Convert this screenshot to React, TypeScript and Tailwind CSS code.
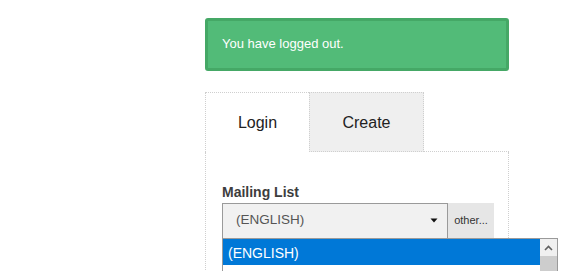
import React from "react";

export default function App() {
  return (
    <div className="h-[271px] w-[573px] overflow-hidden bg-white font-['Liberation_Sans',Arial,sans-serif]">
      <div className="ml-[205px] w-[304px] pt-[18px]">
        <div className="flex h-[53px] items-center rounded-[3px] border-[3px] border-[#45a866] bg-[#52bb78] pb-[2px] pl-[14px] text-[13px] text-white">
          You have logged out.
        </div>
        <div className="mt-[21px] flex h-[60px]">
          <div className="flex w-[104px] items-center justify-center border-l border-t border-dotted border-[#cfcfcf] pt-[1px] text-[16px] text-[#222]">
            Login
          </div>
          <div className="flex w-[115px] items-center justify-center border border-dotted border-[#cfcfcf] bg-[#efefef] pt-[1px] text-[16px] text-[#222]">
            Create
          </div>
          <div className="flex-1 border-b border-dotted border-[#cfcfcf]" />
        </div>
        <div className="relative h-[200px] border-l border-r border-dotted border-[#cfcfcf] pl-[16px] pt-[32px]">
          <div className="mb-[3px] text-[14px] font-bold leading-[16px] text-[#3d3d3d]">
            Mailing List
          </div>
          <div className="flex">
            <div className="flex h-[36px] w-[226px] items-center border border-[#9a9a9a] bg-[#f1f1f1] pl-[13px] pr-[9px] text-[13.5px] text-[#555]">
              <span className="flex-1 pb-[1px]">(ENGLISH)</span>
              <svg width="8" height="5" viewBox="0 0 8 5" className="mb-[1px]">
                <path d="M0.5 0.5 L7.5 0.5 L4 4.5 Z" fill="#111" />
              </svg>
            </div>
            <div className="flex h-[36px] w-[46px] items-center justify-center bg-[#e6e6e6] pb-[1px] text-[11px] text-[#333]">
              other...
            </div>
          </div>
          <div className="absolute left-[16px] top-[86px] w-[336px] border border-[#9a9a9a] bg-white">
            <div className="flex">
              <div className="flex-1">
                <div className="flex h-[26px] items-center bg-[#0078d7] pl-[5px] pt-[3px] text-[14px] text-white">
                  (ENGLISH)
                </div>
                <div className="h-[22px]" />
              </div>
              <div className="flex w-[17px] flex-col bg-[#f0f0f0]">
                <div className="flex h-[17px] items-center justify-center">
                  <svg width="9" height="6" viewBox="0 0 9 6">
                    <path d="M1 5 L4.5 1.5 L8 5" fill="none" stroke="#606060" strokeWidth="1.6" />
                  </svg>
                </div>
                <div className="h-[40px] bg-[#cdcdcd]" />
              </div>
            </div>
          </div>
        </div>
      </div>
    </div>
  );
}
